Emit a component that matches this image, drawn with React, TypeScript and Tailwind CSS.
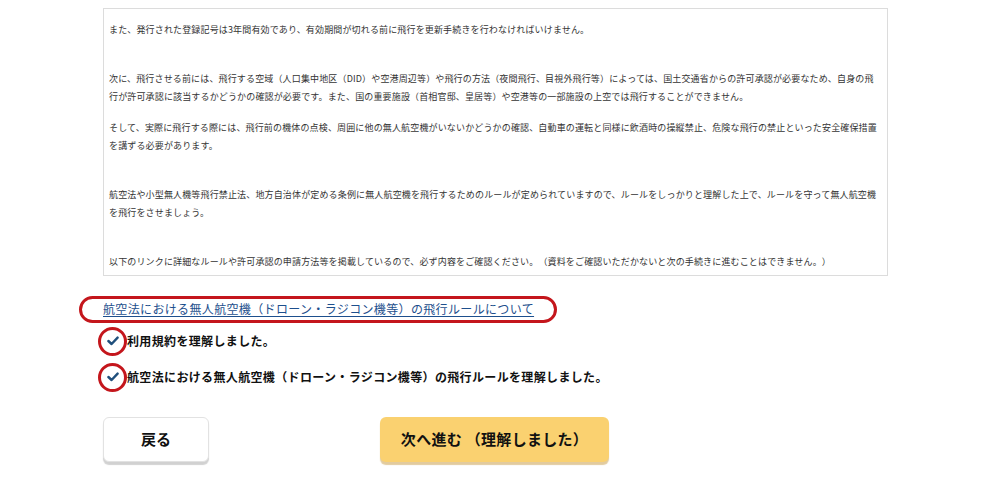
import React from "react";

const jp = { fontFamily: '"Noto Sans CJK JP", "Noto Sans", sans-serif' };

const paragraphs: { lines: string[]; spacer?: boolean }[] = [
  {
    lines: [
      "また、発行された登録記号は3年間有効であり、有効期間が切れる前に飛行を更新手続きを行わなければいけません。",
    ],
  },
  {
    spacer: true,
    lines: [
      "次に、飛行させる前には、飛行する空域（人口集中地区（DID）や空港周辺等）や飛行の方法（夜間飛行、目視外飛行等）によっては、国土交通省からの許可承認が必要なため、自身の飛",
      "行が許可承認に該当するかどうかの確認が必要です。また、国の重要施設（首相官邸、皇居等）や空港等の一部施設の上空では飛行することができません。",
    ],
  },
  {
    lines: [
      "そして、実際に飛行する際には、飛行前の機体の点検、周囲に他の無人航空機がいないかどうかの確認、自動車の運転と同様に飲酒時の操縦禁止、危険な飛行の禁止といった安全確保措置",
      "を講ずる必要があります。",
    ],
  },
  {
    spacer: true,
    lines: [
      "航空法や小型無人機等飛行禁止法、地方自治体が定める条例に無人航空機を飛行するためのルールが定められていますので、ルールをしっかりと理解した上で、ルールを守って無人航空機",
      "を飛行をさせましょう。",
    ],
  },
  {
    spacer: true,
    lines: [
      "以下のリンクに詳細なルールや許可承認の申請方法等を掲載しているので、必ず内容をご確認ください。（資料をご確認いただかないと次の手続きに進むことはできません。）",
    ],
  },
];

function CheckRow({ label }: { label: string }) {
  return (
    <div className="flex h-[36px] items-center">
      {/* red circle marks the checked box */}
      <span className="ml-[-5px] flex h-[29px] w-[29px] items-center justify-center rounded-full border-[3px] border-[#c4161c]">
        <svg width="12" height="10" viewBox="0 0 12 10">
          <path
            d="M1.4 5 L4.6 8 L10.6 1.6"
            fill="none"
            stroke="#1f4f7c"
            strokeWidth="2.4"
            strokeLinecap="round"
            strokeLinejoin="round"
          />
        </svg>
      </span>
      <span className="text-[12px] font-bold tracking-[0.35px] text-[#111]">{label}</span>
    </div>
  );
}

export default function App() {
  return (
    <div
      className="h-[494px] w-[990px] overflow-hidden bg-white [text-spacing-trim:space-all]"
      style={jp}
    >
      <div className="ml-[103px] w-[785px] pt-[8px]">
        {/* Terms text box */}
        <div className="h-[268px] overflow-hidden border border-[#dcdcdc] px-[5px] pt-[12px] text-[9px] leading-[18px] tracking-[0.15px] text-[#333]">
          {paragraphs.map((p, i) => (
            <div key={i}>
              {p.spacer && <div className="h-[18px]" />}
              <p className="mb-[13px] whitespace-nowrap">
                {p.lines.map((l, j) => (
                  <span key={j} className="block">
                    {l}
                  </span>
                ))}
              </p>
            </div>
          ))}
        </div>

        {/* Link with red ring */}
        <div className="mt-[19px]">
          <a
            href="#"
            className="ml-[-24px] inline-block h-[27px] rounded-full border-[3px] border-[#c4161c] pl-[21px] pr-[20px] text-[12px] leading-[19px] tracking-[0.35px] text-[#1d4f8d] underline underline-offset-2"
          >
            航空法における無人航空機（ドローン・ラジコン機等）の飛行ルールについて
          </a>
        </div>

        <div>
          <CheckRow label="利用規約を理解しました。" />
          <CheckRow label="航空法における無人航空機（ドローン・ラジコン機等）の飛行ルールを理解しました。" />
        </div>

        {/* Buttons */}
        <div className="mt-[22px] flex items-start gap-[171px]">
          <button className="flex h-[45px] w-[106px] items-center justify-center rounded-[6px] border border-[#e2e2e2] bg-white text-[15px] font-bold text-[#111] shadow-[0_3px_1px_rgba(0,0,0,0.18)]">
            戻る
          </button>
          <button className="flex h-[45px] w-[229px] items-center justify-center whitespace-pre rounded-[6px] bg-[#fad170] text-[15px] font-bold tracking-[0.3px] text-[#111] shadow-[0_3px_1px_rgba(190,140,40,0.45)]">
            {"次へ進む （理解しました）"}
          </button>
        </div>
      </div>
    </div>
  );
}
